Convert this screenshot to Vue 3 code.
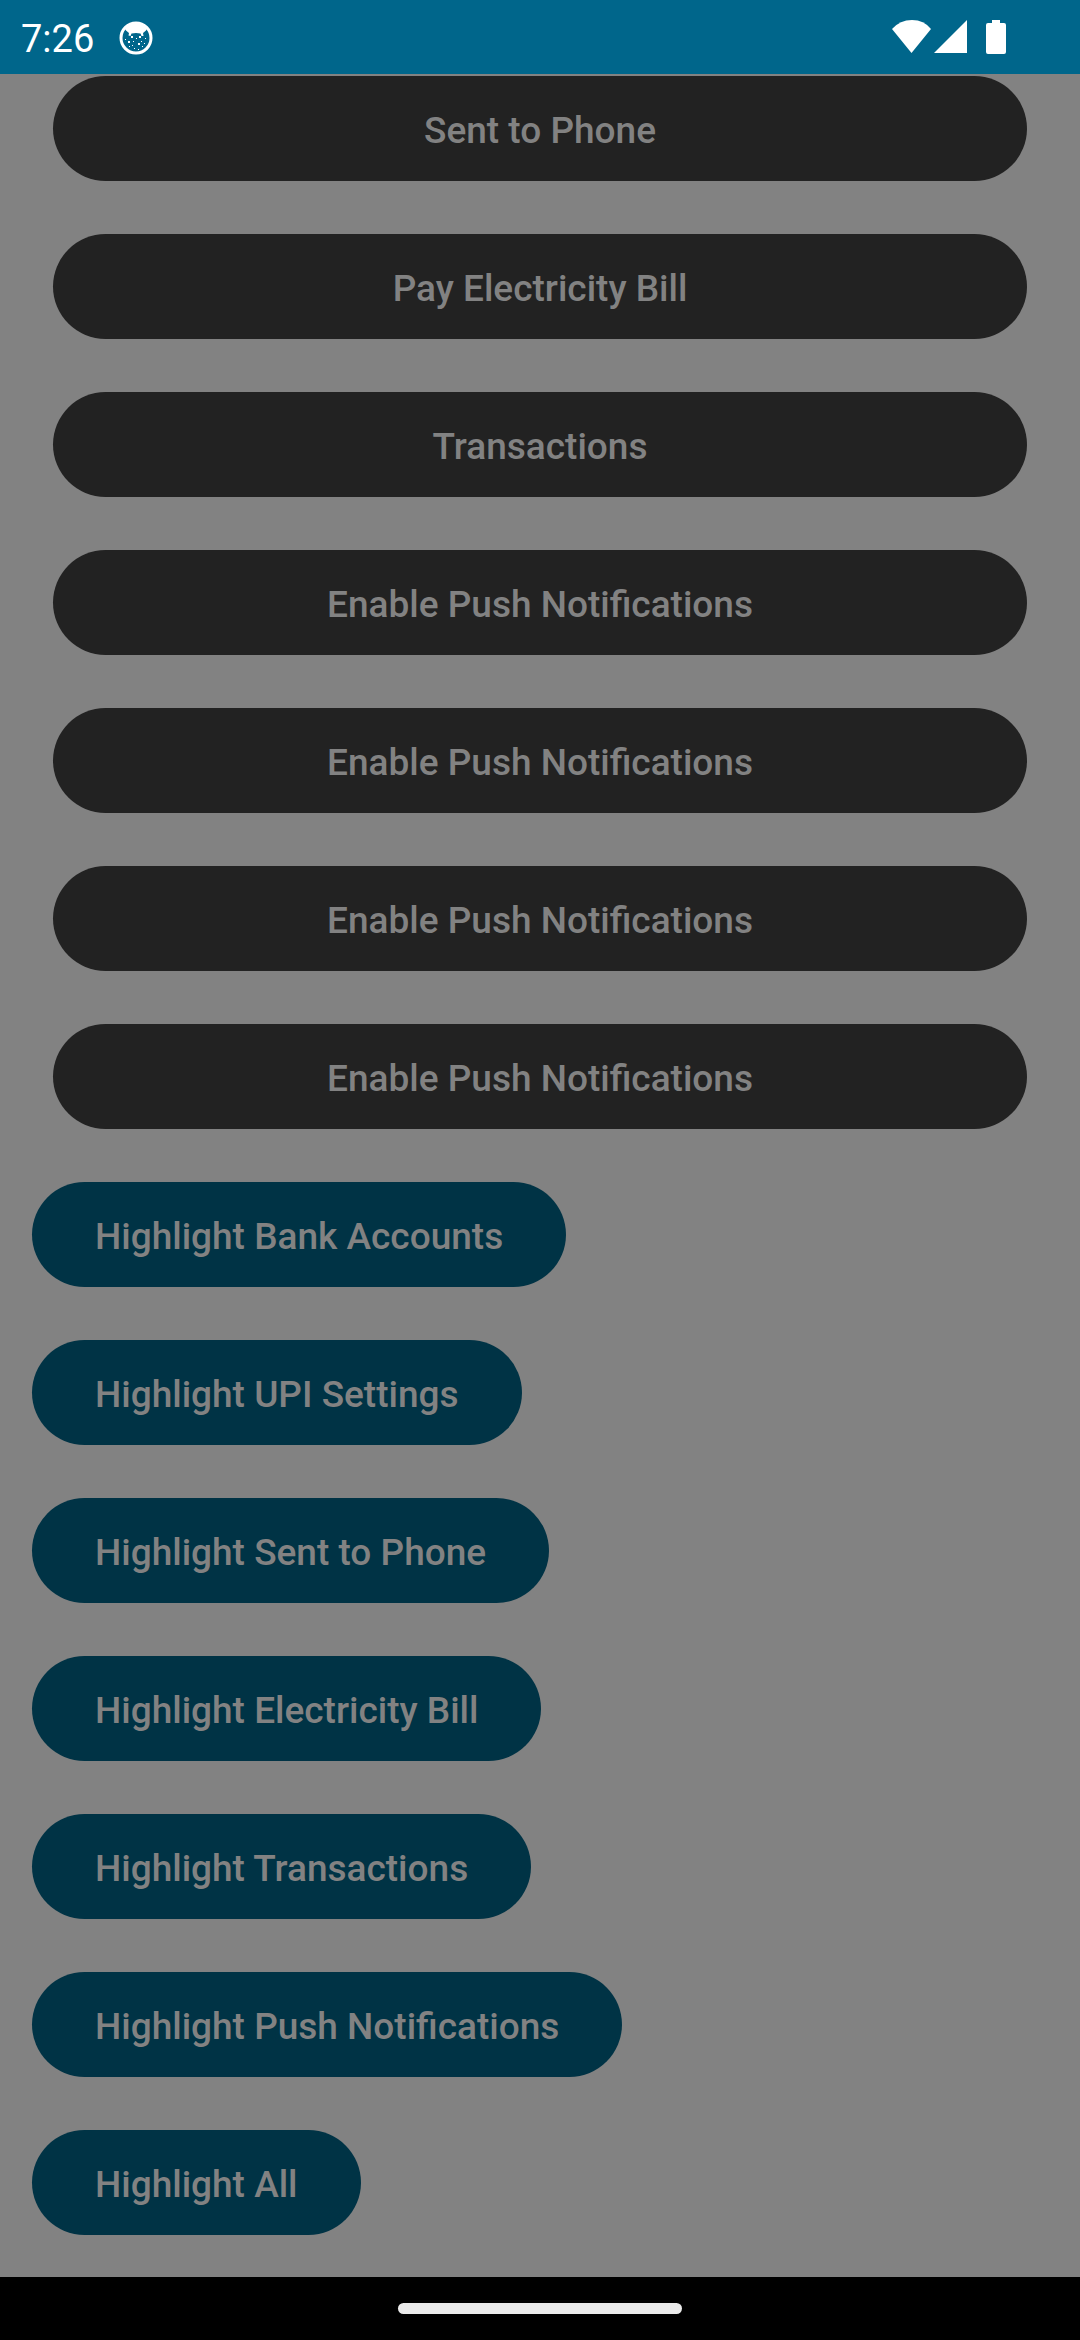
<script setup>
const actions = [
  'Sent to Phone',
  'Pay Electricity Bill',
  'Transactions',
  'Enable Push Notifications',
  'Enable Push Notifications',
  'Enable Push Notifications',
  'Enable Push Notifications',
]

const highlights = [
  'Highlight Bank Accounts',
  'Highlight UPI Settings',
  'Highlight Sent to Phone',
  'Highlight Electricity Bill',
  'Highlight Transactions',
  'Highlight Push Notifications',
  'Highlight All',
]
</script>

<template>
  <div class="screen">
    <header class="status-bar">
      <time class="clock">7:26</time>
      <svg class="cat" viewBox="0 0 34 34" aria-hidden="true">
        <circle cx="17" cy="17" r="15" fill="none" stroke="#fff" stroke-width="3" />
        <path
          d="M6 7.500Q17-3 28 7.500L27 9.500L24 12L24.500 15L22.500 15L21.500 12.500Q17 11.500 12.500 12.500L11.500 15L9.500 14.500L10 12L7 9.500Z"
          fill="#fff"
        />
        <g fill="#fff">
          <rect x="12" y="15" width="2" height="2" />
          <rect x="20" y="15" width="2" height="2" />
          <rect x="9" y="20" width="2" height="2" />
          <rect x="19" y="22" width="2" height="2" />
          <rect x="17" y="17" width="1" height="1" />
          <rect x="14" y="20" width="1" height="1" />
          <rect x="22" y="20" width="1" height="1" />
          <rect x="26" y="17" width="1" height="1" />
          <rect x="6" y="18" width="1" height="1" />
          <rect x="13" y="24" width="1" height="1" />
          <rect x="25" y="22" width="1" height="1" />
          <rect x="10" y="25" width="1" height="1" />
          <rect x="15" y="27" width="1" height="1" />
          <rect x="19" y="28" width="1" height="1" />
          <rect x="23" y="25" width="1" height="1" />
        </g>
      </svg>
      <div class="indicators">
        <svg class="wifi" viewBox="0 0 40 34" aria-hidden="true">
          <path d="M0 9Q8 0 20 0T39 9L19.500 33Z" fill="#fff" />
        </svg>
        <svg class="signal" viewBox="0 0 34 34" aria-hidden="true">
          <path d="M33 0V33H0Z" fill="#fff" />
        </svg>
        <svg class="battery" viewBox="0 0 20 34" aria-hidden="true">
          <path
            d="M6 0H14V3H18Q20 3 20 5V32Q20 34 18 34H2Q0 34 0 32V5Q0 3 2 3H6Z"
            fill="#fff"
          />
        </svg>
      </div>
    </header>

    <main class="content">
      <button
        v-for="(label, index) in actions"
        :key="`action-${index}`"
        type="button"
        class="pill pill-wide"
      >
        {{ label }}
      </button>
      <button v-for="label in highlights" :key="label" type="button" class="pill pill-compact">
        {{ label }}
      </button>
    </main>

    <footer class="nav-bar">
      <div class="handle"></div>
    </footer>
  </div>
</template>

<style>
body {
  margin: 0;
  background: #828282;
}
</style>

<style scoped>
.screen {
  display: flex;
  flex-direction: column;
  min-height: 100vh;
  background: #828282;
  font-family: Roboto, sans-serif;
}

.status-bar {
  display: flex;
  align-items: center;
  box-sizing: border-box;
  height: 74px;
  padding: 2px 74px 0 21px;
  background: #00668b;
  color: #fff;
}

.clock {
  padding-top: 2px;
  font-size: 38px;
  line-height: 44px;
}

.cat {
  width: 34px;
  height: 34px;
  margin-left: 25px;
}

.indicators {
  display: flex;
  align-items: center;
  margin-left: auto;
  padding-bottom: 2px;
}

.wifi {
  width: 40px;
  height: 34px;
}

.signal {
  width: 34px;
  height: 34px;
  margin-left: 2px;
}

.battery {
  width: 20px;
  height: 34px;
  margin-left: 18px;
}

.content {
  display: flex;
  flex: 1;
  flex-direction: column;
  align-items: flex-start;
  gap: 53px;
  padding: 2px 32px 42px;
}

.pill {
  height: 105px;
  padding: 4px 63px 0;
  border: 0;
  border-radius: 53px;
  color: #828282;
  font-family: inherit;
  font-size: 37px;
  font-weight: 500;
  line-height: 52px;
  white-space: nowrap;
}

.pill-wide {
  align-self: stretch;
  margin: 0 21px;
  background: #222;
}

.pill-compact {
  background: #003345;
}

.nav-bar {
  display: flex;
  align-items: center;
  justify-content: center;
  height: 63px;
  background: #000;
}

.handle {
  width: 284px;
  height: 11px;
  border-radius: 6px;
  background: #ebebeb;
}
</style>
